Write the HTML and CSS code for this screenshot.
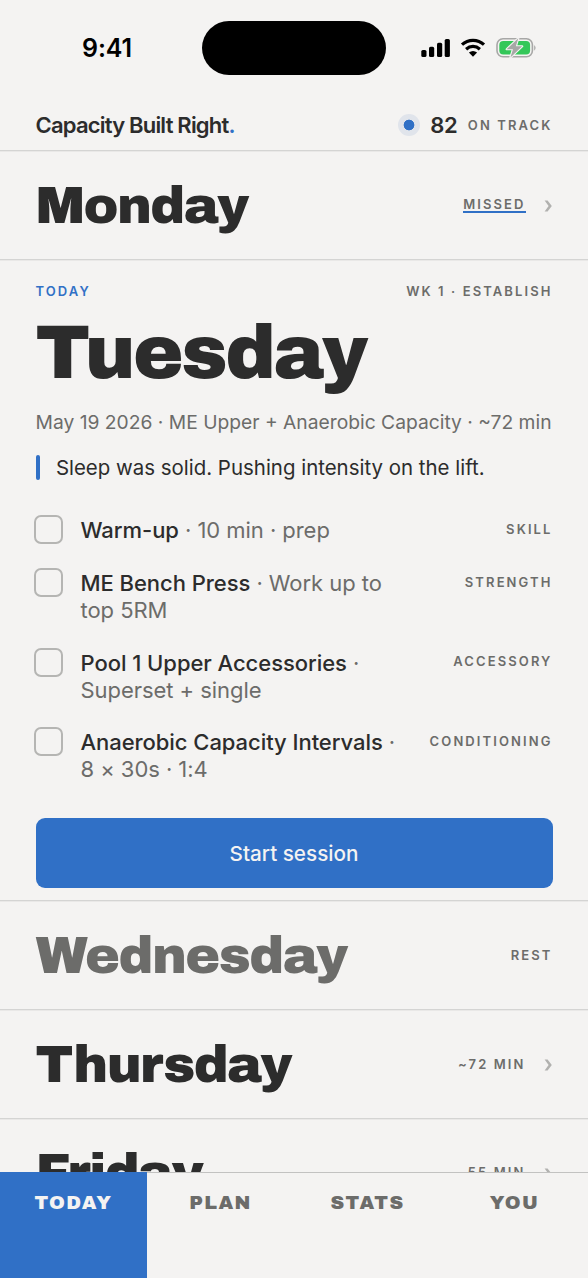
FILE: index.html
```html
<!DOCTYPE html>
<html lang="en">
<head>
<meta charset="utf-8">
<title>Capacity Built Right</title>
<link rel="stylesheet" href="styles.css">
</head>
<body>
<div class="app">
  <div class="status">
    <span class="clock">9:41</span>
    <span class="island"></span>
    <div class="indicators">
      <svg class="signal" width="30" height="20" viewBox="0 0 30 20"><rect x="1.3" y="12" width="5.2" height="7" rx="1.6"/><rect x="9" y="8.8" width="5.2" height="10.2" rx="1.6"/><rect x="17" y="4.8" width="5.2" height="14.2" rx="1.6"/><rect x="24.7" y="1" width="5.2" height="18" rx="1.6"/></svg>
      <svg class="wifi" width="26" height="20" viewBox="0 0 26 20"><path d="M2 6.7C8.2 .9 17.8 .9 24 6.7M6.1 11.2C10.2 7.5 15.8 7.5 19.9 11.2" fill="none" stroke="#000" stroke-width="3.2"/><path d="M8.9 14.6Q13 11.6 17.1 14.6L13 18.8Z"/></svg>
      <svg class="battery" width="42" height="22" viewBox="0 0 42 22"><rect x="1" y="1.8" width="35.4" height="18" rx="6" fill="none" stroke="#a7a7a6" stroke-width="1.6"/><path d="M38.2 8Q41 10.8 38.2 13.7Z" fill="#a7a7a6"/><rect x="3.3" y="4" width="30.8" height="13.6" rx="4" fill="#34c759"/><path d="M22.3 1.3L10.7 12.2H17L14.4 20.5L26.2 9.3H19.9Z" fill="#a7a7a6" stroke="#f4f3f2" stroke-width="2.2" paint-order="stroke" stroke-linejoin="round"/></svg>
    </div>
  </div>
  <header class="header">
    <div class="brand">Capacity Built Right<span>.</span></div>
    <div class="score"><i class="dot"></i><b>82</b><span class="label">ON TRACK</span></div>
  </header>
  <section class="day">
    <h2 class="name monday">Monday</h2>
    <span class="label missed">MISSED</span>
    <svg class="chevron" width="10" height="14" viewBox="0 0 10 14"><path d="M1.6 1.4H4.6L8.8 7L4.6 12.6H1.6L5.6 7Z"/></svg>
  </section>
  <section class="today">
    <div class="eyebrow"><span class="label accent">TODAY</span><span class="label">WK 1 · ESTABLISH</span></div>
    <h1 class="title">Tuesday</h1>
    <p class="meta">May 19 2026 · ME Upper + Anaerobic Capacity · ~72 min</p>
    <p class="note">Sleep was solid. Pushing intensity on the lift.</p>
    <ul class="tasks">
      <li><i class="box"></i><p class="task"><b>Warm-up</b> · 10 min · prep</p><span class="label">SKILL</span></li>
      <li><i class="box"></i><p class="task"><b>ME Bench Press</b> · Work up to<br>top 5RM</p><span class="label">STRENGTH</span></li>
      <li><i class="box"></i><p class="task"><b>Pool 1 Upper Accessories</b> ·<br>Superset + single</p><span class="label">ACCESSORY</span></li>
      <li><i class="box"></i><p class="task"><b>Anaerobic Capacity Intervals</b> ·<br>8 × 30s · 1:4</p><span class="label">CONDITIONING</span></li>
    </ul>
    <button class="start">Start session</button>
  </section>
  <section class="day">
    <h2 class="name wednesday">Wednesday</h2>
    <span class="label">REST</span>
  </section>
  <section class="day">
    <h2 class="name thursday">Thursday</h2>
    <span class="label">~72 MIN</span>
    <svg class="chevron" width="10" height="14" viewBox="0 0 10 14"><path d="M1.6 1.4H4.6L8.8 7L4.6 12.6H1.6L5.6 7Z"/></svg>
  </section>
  <section class="day">
    <h2 class="name friday">Friday</h2>
    <span class="label">~55 MIN</span>
    <svg class="chevron" width="10" height="14" viewBox="0 0 10 14"><path d="M1.6 1.4H4.6L8.8 7L4.6 12.6H1.6L5.6 7Z"/></svg>
  </section>
  <nav class="tabs"><a class="active">TODAY</a><a>PLAN</a><a>STATS</a><a>YOU</a></nav>
</div>
</body>
</html>
```
FILE: styles.css
```css
* { box-sizing: border-box; margin: 0; padding: 0; }
body { background: #f4f3f2; }
.app { position: relative; width: 588px; height: 1278px; overflow: hidden; font-family: Inter, "Liberation Sans", sans-serif; color: #2c2c2c; background: #f4f3f2; }
.status { height: 100px; display: grid; grid-template-columns: 202px 184px 1fr; padding-top: 20px; color: #000; }
.clock { padding-left: 82px; font-size: 25px; font-weight: 600; line-height: 56px; letter-spacing: -0.1px; }
.island { width: 184px; height: 54px; margin-top: 0.5px; border-radius: 27px; background: #000; }
.indicators { display: flex; align-items: center; height: 55px; padding-left: 34px; gap: 10px; }
.header { height: 51px; padding: 0 36.5px 0 35.5px; display: flex; justify-content: space-between; align-items: center; border-bottom: 1px solid #d4d4d3; box-shadow: 0 1px #e9e8e7; }
.brand { font-size: 22px; font-weight: 600; letter-spacing: -0.8px; }
.brand span, .accent { color: #3070c6; }
.score { display: flex; align-items: center; }
.dot { width: 22px; height: 22px; border-radius: 50%; background: radial-gradient(circle, #3070c6 5px, #e0e4eb 5.7px); }
.score b { font-size: 22px; font-weight: 600; margin: 0 10.5px 0 10.5px; letter-spacing: -0.3px; }
.label { font-size: 13px; line-height: 16px; font-weight: 600; letter-spacing: 2.1px; color: #6c6c6a; margin-right: -1px; white-space: nowrap; }
.label.accent { color: #3070c6; }
.day { height: 108.7px; padding: 0 36.5px 0 35.5px; display: flex; align-items: center; border-bottom: 1px solid #d4d4d3; box-shadow: 0 1px #e9e8e7; }
.name, .title { font-family: "Archivo Black", "Liberation Sans", sans-serif; font-weight: 400; }
.name { flex: 1; font-size: 52.5px; line-height: 60px; letter-spacing: -1.58px; padding-top: 2px; }
.wednesday { color: #6c6c6a; }
.missed { box-shadow: 0 1px #3070c6, inset 0 -1px #3070c6; line-height: 15px; }
.chevron { margin-left: 18px; margin-right: -1px; margin-top: 3px; fill: #b1b1af; }
.today { height: 641.5px; padding: 23px 36.5px 0 35.5px; border-bottom: 1px solid #d4d4d3; box-shadow: 0 1px #e9e8e7; }
.eyebrow { display: flex; justify-content: space-between; height: 16px; }
.title { font-size: 76px; line-height: 90px; letter-spacing: -2.4px; margin-top: 9px; }
.meta { font-size: 19.25px; line-height: 26px; color: #6c6c6a; margin-top: 11px; white-space: nowrap; }
.note { display: flex; align-items: center; height: 25px; margin-top: 20px; font-size: 20.45px; white-space: nowrap; }
.note::before { content: ""; width: 4.4px; height: 25px; border-radius: 2px; background: #3070c6; margin-right: 16px; }
.tasks { list-style: none; margin-top: 34.5px; display: flex; flex-direction: column; gap: 26px; }
.tasks li { display: flex; align-items: flex-start; }
.box { width: 29px; height: 29px; margin: 1px 17.5px -3px -1.5px; border: 2px solid #b5b5b3; border-radius: 7px; flex: none; }
.task { flex: 1; padding-top: 3px; margin-bottom: -3px; font-size: 22px; line-height: 26.8px; letter-spacing: -0.05px; color: #6c6c6a; white-space: nowrap; }
.task b { color: #2c2c2c; font-weight: 500; }
.tasks .label { margin-top: 6.5px; }
.start { display: block; width: 517px; height: 70px; margin: 38.5px 0 0; border: 0; border-radius: 9px; background: #3070c6; color: #f4f3f2; font: 500 20.7px Inter, sans-serif; }
.tabs { position: absolute; left: 0; right: 0; bottom: 0; height: 106px; display: grid; grid-template-columns: repeat(4, 1fr); background: #f4f3f2; border-top: 1px solid #c2c2c1; }
.tabs a { padding-top: 18px; text-align: center; font: 400 19px/24px "Archivo Black", "Liberation Sans", sans-serif; letter-spacing: 1.4px; color: #6c6c6a; }
.tabs .active { background: #3070c6; color: #f4f3f2; margin-top: -1px; padding-top: 19px; }
```
